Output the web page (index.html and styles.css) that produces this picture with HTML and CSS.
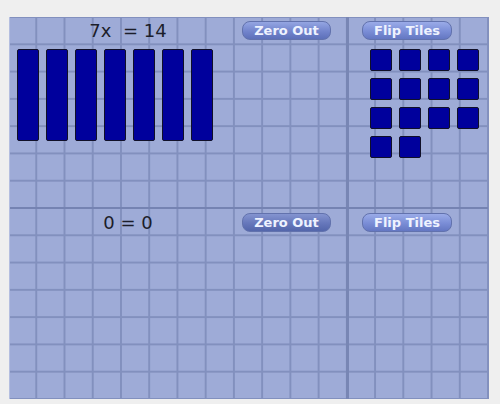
FILE: index.html
```html
<!DOCTYPE html>
<html lang="en">
<head>
    <meta charset="UTF-8">
    <title>Algebra Tiles</title>
    <link rel="stylesheet" href="styles.css">
</head>
<body>
    <div class="mat">
        <section class="half top">
            <div class="side">
                <div class="head">
                    <span class="equation">7x&nbsp; = 14</span>
                    <button class="btn">Zero Out</button>
                </div>
                <div class="bars">
                    <div class="tile bar"></div>
                    <div class="tile bar"></div>
                    <div class="tile bar"></div>
                    <div class="tile bar"></div>
                    <div class="tile bar"></div>
                    <div class="tile bar"></div>
                    <div class="tile bar"></div>
                </div>
            </div>
            <div class="side right">
                <div class="head">
                    <button class="btn flip">Flip Tiles</button>
                </div>
                <div class="units">
                    <div class="tile unit"></div>
                    <div class="tile unit"></div>
                    <div class="tile unit"></div>
                    <div class="tile unit"></div>
                    <div class="tile unit"></div>
                    <div class="tile unit"></div>
                    <div class="tile unit"></div>
                    <div class="tile unit"></div>
                    <div class="tile unit"></div>
                    <div class="tile unit"></div>
                    <div class="tile unit"></div>
                    <div class="tile unit"></div>
                    <div class="tile unit"></div>
                    <div class="tile unit"></div>
                </div>
            </div>
        </section>
        <section class="half">
            <div class="side">
                <div class="head">
                    <span class="equation">0 = 0</span>
                    <button class="btn dim">Zero Out</button>
                </div>
            </div>
            <div class="side right">
                <div class="head">
                    <button class="btn flip">Flip Tiles</button>
                </div>
            </div>
        </section>
    </div>
</body>
</html>
```

FILE: styles.css
```css
body {
    margin: 0;
    padding: 17px 0 0 9px;
    background-color: #efefef;
    font-family: "DejaVu Sans", Verdana, sans-serif;
}

.mat {
    width: 480px;
    height: 382px;
    box-sizing: border-box;
    border-left: 1px solid #b4bee0;
    border-right: 1px solid #8390bd;
    background-color: #9eabd7;
    background-image:
        linear-gradient(to right, transparent calc(100% - 2px), #8290be calc(100% - 2px)),
        linear-gradient(to bottom, transparent calc(100% - 2px), #8290be calc(100% - 2px));
    background-size: 28.235px 100%, 100% 27.286px;
    background-position: -1px 0, 0 1px;
}

.half {
    display: grid;
    grid-template-columns: 339px 140px;
    height: 191px;
    box-sizing: border-box;
}

.top {
    height: 192px;
    border-bottom: 2px solid #7583b2;
}

.side {
    display: flex;
    flex-direction: column;
}

.side:first-child {
    border-right: 3px solid #7886b4;
}

.head {
    display: flex;
    align-items: center;
    height: 27px;
}

.right .head {
    padding-left: 13px;
}

.equation {
    width: 228px;
    padding-left: 4px;
    text-align: center;
    font-size: 18px;
    color: #1c1e2a;
}

.btn {
    width: 89px;
    height: 19px;
    padding: 0;
    border: 1px solid #6272ad;
    border-radius: 8px;
    background: linear-gradient(to bottom, #94a5e2, #7284cc 55%, #5d70b9);
    color: #eef2ff;
    font-family: "DejaVu Sans", Verdana, sans-serif;
    font-size: 13px;
    font-weight: bold;
    cursor: pointer;
}

.btn.flip {
    width: 90px;
    background: linear-gradient(to bottom, #9aabe8, #7a8dd6 55%, #6477c2);
}

.btn.dim {
    background: linear-gradient(to bottom, #8494d0, #6677bb 55%, #5366ab);
}

.tile {
    box-sizing: border-box;
    background-color: #00009c;
    border: 1px solid #101028;
    border-radius: 2px;
}

.bars {
    display: flex;
    gap: 7px;
    margin-top: 5px;
    padding-left: 7px;
}

.bar {
    width: 22px;
    height: 92px;
}

.units {
    display: grid;
    grid-template-columns: repeat(4, 22px);
    gap: 7px;
    margin-top: 5px;
    padding-left: 21px;
}

.unit {
    height: 22px;
}
```
